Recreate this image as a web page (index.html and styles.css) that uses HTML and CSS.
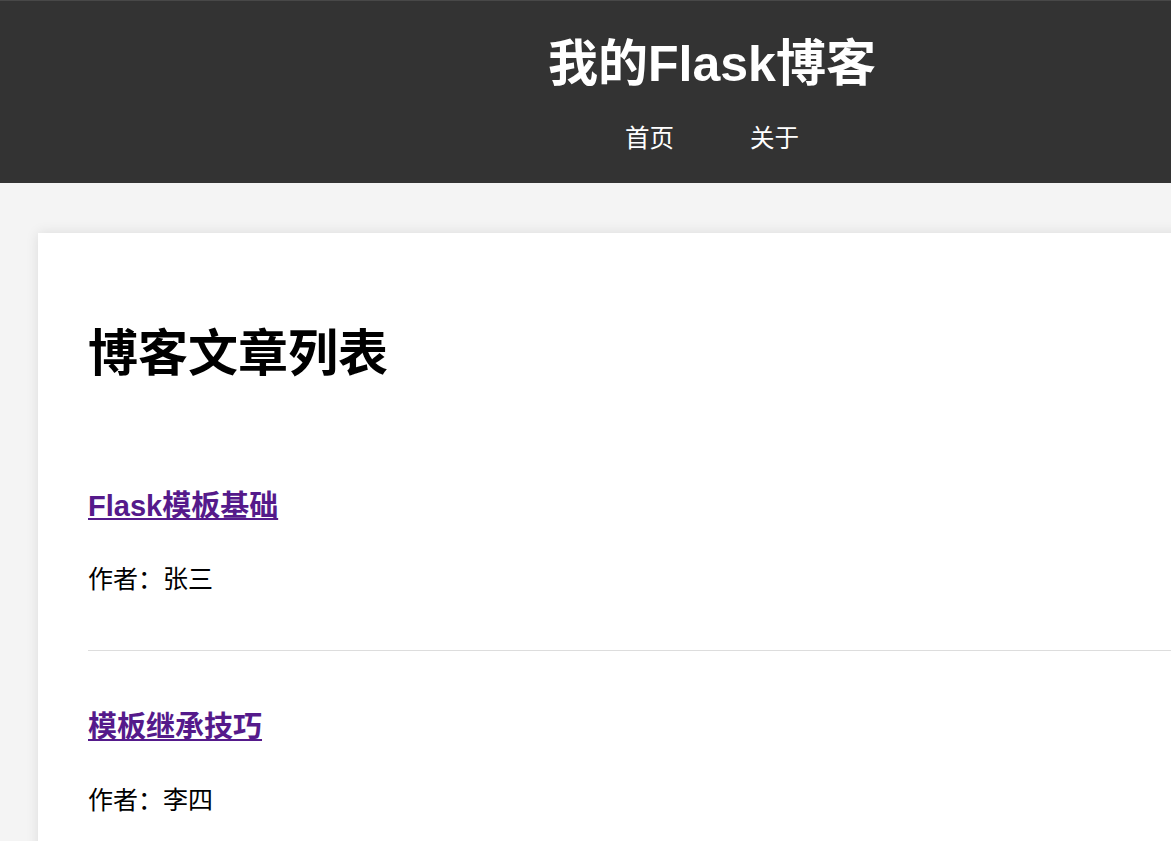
FILE: index.html
```html
<!DOCTYPE html>
<html lang="zh-CN">
<head>
<meta charset="utf-8">
<title>我的Flask博客</title>
<link rel="stylesheet" href="styles.css">
</head>
<body>
<div class="page">
  <header class="site-header">
    <h1 class="site-title">我的Flask博客</h1>
    <nav class="site-nav">
      <a href="#" class="nav-link">首页</a>
      <a href="#" class="nav-link">关于</a>
    </nav>
  </header>
  <main class="main">
    <section class="card">
      <h1 class="page-title">博客文章列表</h1>
      <article class="post">
        <h2 class="post-title"><a href="#" class="post-link">Flask模板基础</a></h2>
        <p class="post-meta">作者：张三</p>
      </article>
      <article class="post">
        <h2 class="post-title"><a href="#" class="post-link">模板继承技巧</a></h2>
        <p class="post-meta">作者：李四</p>
      </article>
    </section>
  </main>
</div>
</body>
</html>
```

FILE: styles.css
```css
html, body {
  margin: 0;
  padding: 0;
  overflow: hidden;
  background: #f4f4f4;
}

body {
  font-family: "Liberation Sans", Arial, "Noto Sans CJK SC", sans-serif;
  color: #000;
}

.page {
  width: 1424px;
}

.site-header {
  background: #333333;
  border-top: 1px solid #484848;
  padding: 33px 0 29px;
  text-align: center;
  color: #fff;
}

.site-title {
  margin: 0;
  font-size: 50px;
  line-height: 60px;
  font-weight: bold;
}

.site-nav {
  margin-top: 30px;
  height: 30px;
  display: flex;
  justify-content: center;
  gap: 76px;
}

.nav-link {
  color: #fff;
  text-decoration: none;
  font-size: 24.5px;
  line-height: 30px;
}

.main {
  padding: 50px 38px;
}

.card {
  background: #fff;
  box-shadow: 0 0 12px rgba(0, 0, 0, 0.1);
  padding: 91px 50px 40px;
}

.page-title {
  margin: 0;
  font-size: 50px;
  line-height: 60px;
  font-weight: bold;
}

.post {
  border-bottom: 1px solid #dddddd;
  padding-bottom: 56px;
}

.post:first-of-type {
  margin-top: 104px;
}

.post + .post {
  margin-top: 58px;
}

.post-title {
  margin: 0;
  font-size: 29px;
  line-height: 36px;
  font-weight: bold;
}

.post-link {
  color: #551a8b;
  text-decoration: underline;
}

.post-meta {
  margin: 40px 0 0;
  font-size: 25px;
  line-height: 30px;
}
```
